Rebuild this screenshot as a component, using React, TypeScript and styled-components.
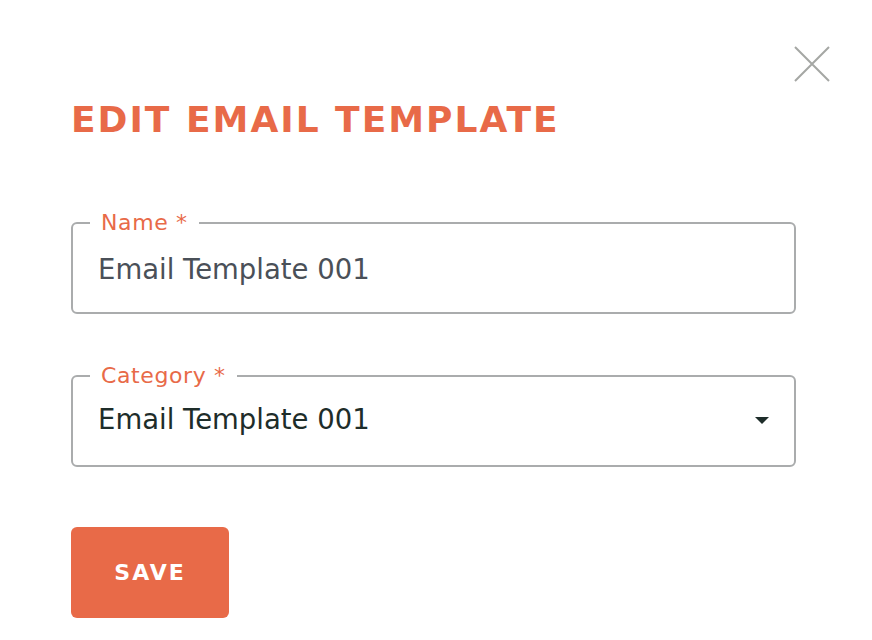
import styled, { createGlobalStyle } from 'styled-components'

const ORANGE = '#e86a48'

const GlobalStyle = createGlobalStyle`
  html, body {
    margin: 0;
    background: #ffffff;
  }
  body {
    font-family: 'DejaVu Sans', 'Noto Sans', sans-serif;
  }
`

const App = () => (
  <>
    <GlobalStyle />
    <Modal>
      <CloseRow>
        <CloseButton aria-label="Close">
          <svg width="36" height="36" viewBox="0 0 36 36">
            <path d="M1 1 L35 35 M35 1 L1 35" stroke="#a5a7a4" strokeWidth="2" fill="none" />
          </svg>
        </CloseButton>
      </CloseRow>
      <Title>Edit Email Template</Title>
      <Form>
        <Field>
          <Legend>Name *</Legend>
          <Value>
            <ValueText tone="input" lift={3}>Email Template 001</ValueText>
          </Value>
        </Field>
        <Field>
          <Legend>Category *</Legend>
          <Value>
            <ValueText tone="select" lift={10}>Email Template 001</ValueText>
            <Caret />
          </Value>
        </Field>
        <SaveButton>Save</SaveButton>
      </Form>
    </Modal>
  </>
)

export default App

const Modal = styled.div`
  display: flex;
  flex-direction: column;
  padding: 46px 42px 0 71px;
`

const CloseRow = styled.div`
  display: flex;
  justify-content: flex-end;
`

const CloseButton = styled.button`
  background: none;
  border: none;
  padding: 0;
  width: 36px;
  height: 36px;
  cursor: pointer;
  display: flex;
`

const Title = styled.h1`
  margin: 18px 0 0;
  color: ${ORANGE};
  font-size: 36px;
  line-height: 40px;
  font-weight: 700;
  letter-spacing: 2px;
  text-transform: uppercase;
`

const Form = styled.div`
  display: flex;
  flex-direction: column;
  align-items: flex-start;
  gap: 52px;
  margin-top: 73px;
`

const Field = styled.fieldset`
  margin: 0;
  padding: 0 24px 0 25px;
  width: 725px;
  box-sizing: border-box;
  border: 2px solid #aaacad;
  border-radius: 6px;
`

const Legend = styled.legend`
  margin-left: -8px;
  padding: 0 11px;
  color: ${ORANGE};
  font-size: 22px;
  line-height: 20px;
  letter-spacing: 0.6px;
`

const Value = styled.div`
  display: flex;
  align-items: center;
  justify-content: space-between;
  box-sizing: border-box;
  height: 83px;
  margin-top: -4px;
`

const ValueText = styled.span<{ tone: 'input' | 'select'; lift: number }>`
  margin-bottom: ${({ lift }) => lift}px;
  font-size: 27.5px;
  color: ${({ tone }) => (tone === 'input' ? '#4a5058' : '#1e2d2a')};
`

const Caret = styled.span`
  width: 0;
  height: 0;
  margin: 0 1px 6px 0;
  border-left: 7px solid transparent;
  border-right: 7px solid transparent;
  border-top: 7px solid #1e2d2a;
`

const SaveButton = styled.button`
  margin-top: 8px;
  width: 158px;
  height: 91px;
  border: none;
  border-radius: 6px;
  background: ${ORANGE};
  color: #ffffff;
  font-family: 'DejaVu Sans', 'Noto Sans', sans-serif;
  font-size: 22px;
  font-weight: 700;
  letter-spacing: 2px;
  text-transform: uppercase;
  cursor: pointer;
`
